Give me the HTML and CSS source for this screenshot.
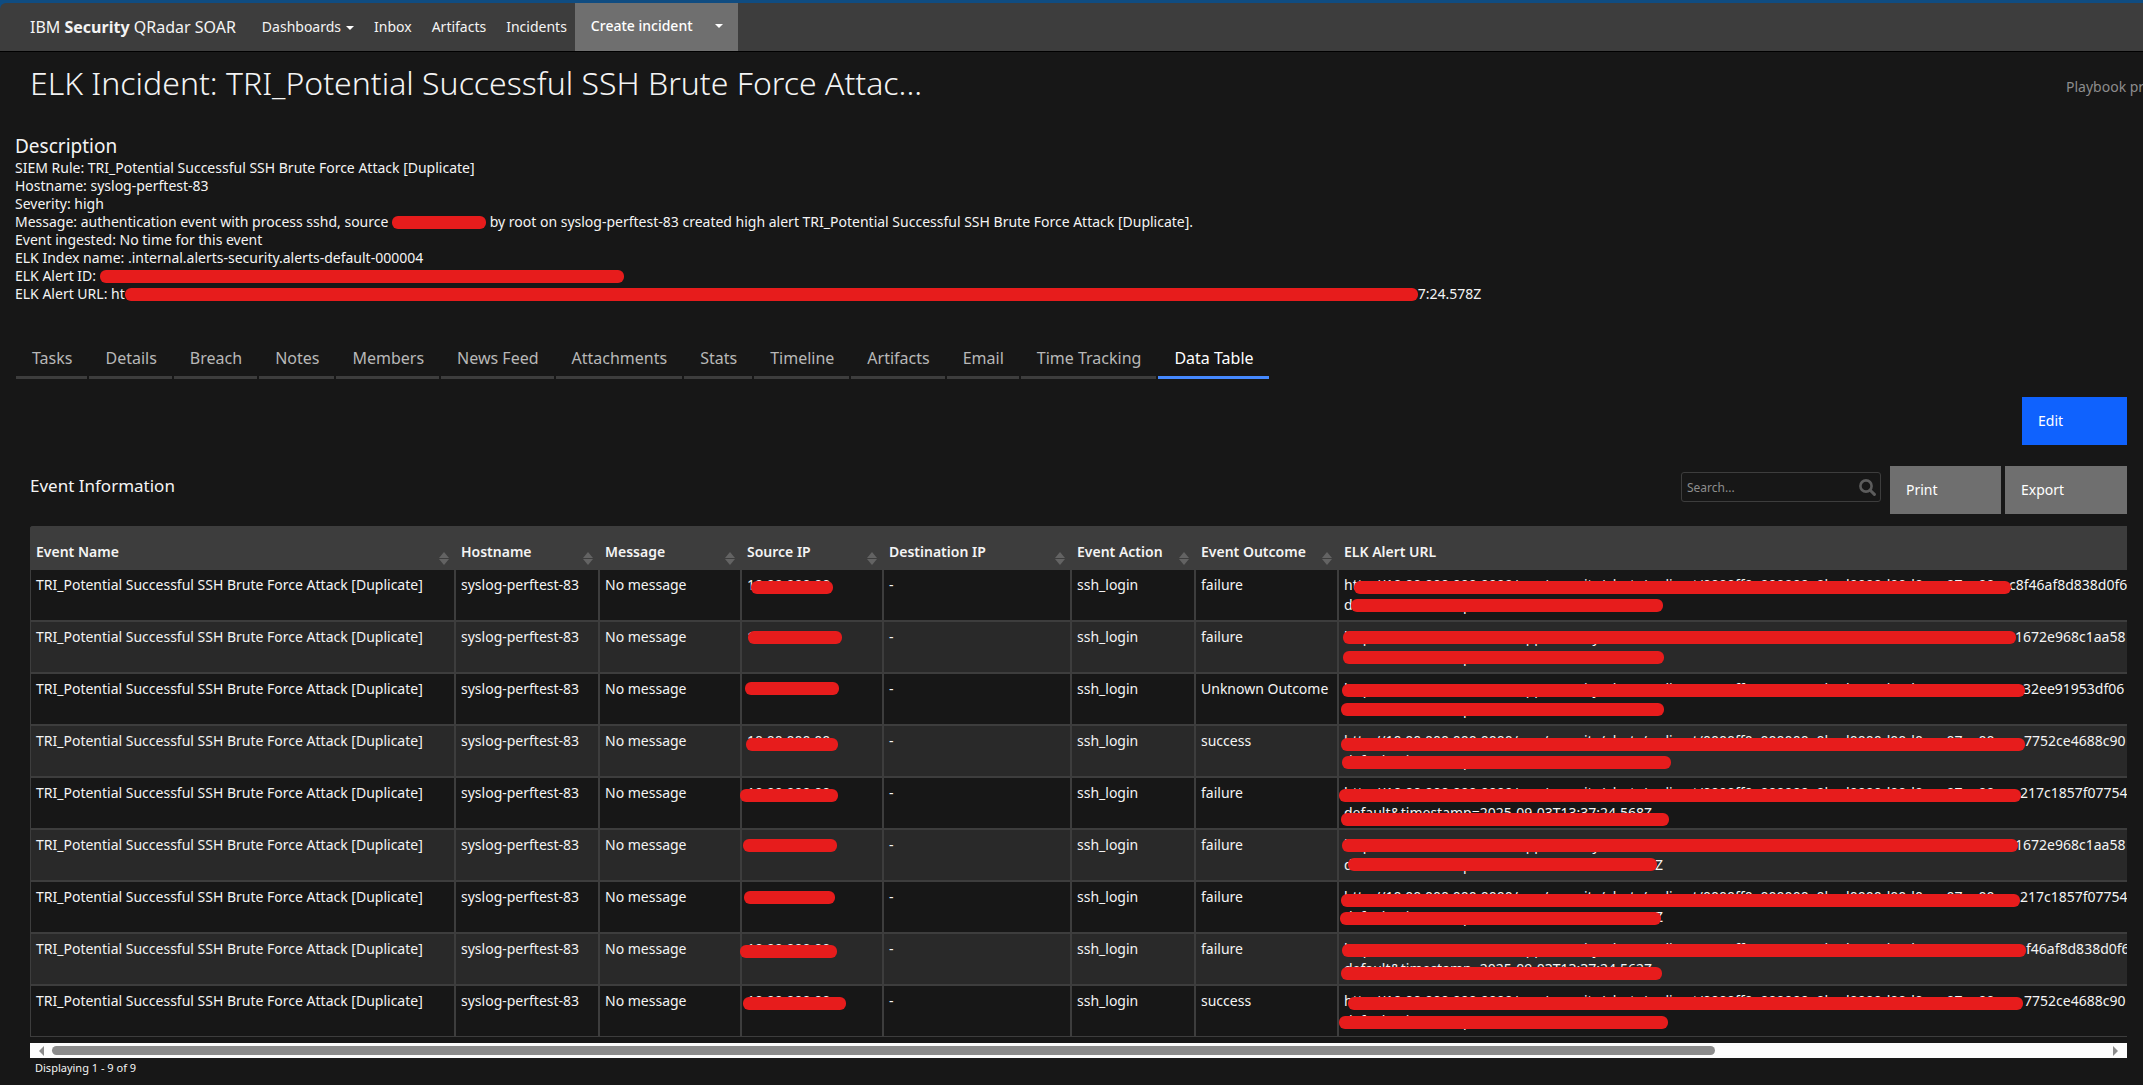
FILE: index.html
```html
<!DOCTYPE html>
<html lang="en">
<head>
<meta charset="utf-8">
<title>IBM Security QRadar SOAR</title>
<link rel="stylesheet" href="styles.css">
</head>
<body>
<header class="topbar">
  <div class="topbar-inner">
    <a class="brand" href="#">IBM <b>Security</b> QRadar SOAR</a>
    <nav class="nav">
      <a href="#">Dashboards<span class="caret"></span></a>
      <a href="#">Inbox</a>
      <a href="#">Artifacts</a>
      <a href="#">Incidents</a>
    </nav>
    <button class="create" type="button"><span>Create incident</span><span class="caret"></span></button>
  </div>
</header>

<main class="page">
  <div class="heading">
    <h1>ELK Incident: TRI_Potential Successful SSH Brute Force Attac...</h1>
    <a class="playbook" href="#">Playbook progress</a>
  </div>

  <section class="description">
    <h2>Description</h2>
    <p>SIEM Rule: TRI_Potential Successful SSH Brute Force Attack [Duplicate]</p>
    <p>Hostname: syslog-perftest-83</p>
    <p>Severity: high</p>
    <p>Message: authentication event with process sshd, source <span class="pill" style="width:94px"></span> by root on syslog-perftest-83 created high alert TRI_Potential Successful SSH Brute Force Attack [Duplicate].</p>
    <p>Event ingested: No time for this event</p>
    <p>ELK Index name: .internal.alerts-security.alerts-default-000004</p>
    <p>ELK Alert ID: <span class="pill" style="width:524px"></span></p>
    <p>ELK Alert URL: ht<span class="pill" style="width:1293px"></span>7:24.578Z</p>
  </section>

  <nav class="tabs">
    <a href="#">Tasks</a>
    <a href="#">Details</a>
    <a href="#">Breach</a>
    <a href="#">Notes</a>
    <a href="#">Members</a>
    <a href="#">News Feed</a>
    <a href="#">Attachments</a>
    <a href="#">Stats</a>
    <a href="#">Timeline</a>
    <a href="#">Artifacts</a>
    <a href="#">Email</a>
    <a href="#">Time Tracking</a>
    <a class="active" href="#" aria-current="page">Data Table</a>
  </nav>

  <section class="data">
    <div class="edit-row"><button class="btn primary" type="button">Edit</button></div>
    <div class="toolbar">
      <h3>Event Information</h3>
      <div class="search">
        <input type="text" placeholder="Search..." aria-label="Search">
        <svg viewBox="0 0 17 17" width="17" height="17" aria-hidden="true"><circle cx="7" cy="7" r="5.6" fill="none" stroke="#5c5c5c" stroke-width="2.6"/><path d="M11.2 11.2L15.4 15.4" stroke="#5c5c5c" stroke-width="3" stroke-linecap="round"/></svg>
      </div>
      <button class="btn print" type="button">Print</button>
      <button class="btn export" type="button">Export</button>
    </div>

    <div class="grid">
      <table>
        <colgroup><col class="c-name"><col class="c-host"><col class="c-msg"><col class="c-src"><col class="c-dst"><col class="c-act"><col class="c-out"><col class="c-url"></colgroup>
        <thead>
          <tr>
            <th>Event Name<i class="sort"></i></th>
            <th>Hostname<i class="sort"></i></th>
            <th>Message<i class="sort"></i></th>
            <th>Source IP<i class="sort"></i></th>
            <th>Destination IP<i class="sort"></i></th>
            <th>Event Action<i class="sort"></i></th>
            <th>Event Outcome<i class="sort"></i></th>
            <th>ELK Alert URL</th>
          </tr>
        </thead>
        <tbody>
          <tr>
            <td>TRI_Potential Successful SSH Brute Force Attack [Duplicate]</td><td>syslog-perftest-83</td><td>No message</td>
            <td>10.00.000.00<i class="mark" style="left:9px;top:11px;width:82px"></i></td>
            <td>-</td><td>ssh_login</td><td>failure</td>
            <td><span class="masked" style="width:665px">http://10.00.000.000:0000/app/security/alerts/redirect/0000ff0e000000e0bed0000d00d0aee07ee00</span>c8f46af8d838d0f6<br>default&amp;timestamp=0000-00-00T00:00:00.000Z<i class="mark" style="left:15px;top:11px;width:657px"></i><i class="mark" style="left:12px;top:29px;width:312px"></i></td>
          </tr>
          <tr>
            <td>TRI_Potential Successful SSH Brute Force Attack [Duplicate]</td><td>syslog-perftest-83</td><td>No message</td>
            <td>10.00.000.00<i class="mark" style="left:6px;top:9px;width:94px"></i></td>
            <td>-</td><td>ssh_login</td><td>failure</td>
            <td><span class="masked" style="width:671px">http://10.00.000.000:0000/app/security/alerts/redirect/0000ff0e000000e0bed0000d00d0aee07ee00</span>1672e968c1aa58<br>default&amp;timestamp=0000-00-00T00:00:00.000Z<i class="mark" style="left:4px;top:9px;width:673px"></i><i class="mark" style="left:4px;top:29px;width:321px"></i></td>
          </tr>
          <tr>
            <td>TRI_Potential Successful SSH Brute Force Attack [Duplicate]</td><td>syslog-perftest-83</td><td>No message</td>
            <td>10.00.000.00<i class="mark" style="left:3px;top:8px;width:94px"></i></td>
            <td>-</td><td>ssh_login</td><td>Unknown Outcome</td>
            <td><span class="masked" style="width:679px">http://10.00.000.000:0000/app/security/alerts/redirect/0000ff0e000000e0bed0000d00d0aee07ee00</span>32ee91953df06<br>default&amp;timestamp=0000-00-00T00:00:00.000Z<i class="mark" style="left:3px;top:10px;width:683px"></i><i class="mark" style="left:2px;top:29px;width:323px"></i></td>
          </tr>
          <tr>
            <td>TRI_Potential Successful SSH Brute Force Attack [Duplicate]</td><td>syslog-perftest-83</td><td>No message</td>
            <td>10.00.000.00<i class="mark" style="left:4px;top:12px;width:92px"></i></td>
            <td>-</td><td>ssh_login</td><td>success</td>
            <td><span class="masked" style="width:680px">http://10.00.000.000:0000/app/security/alerts/redirect/0000ff0e000000e0bed0000d00d0aee07ee00</span>7752ce4688c90<br>default&amp;timestamp=0000-00-00T00:00:00.000Z<i class="mark" style="left:2px;top:12px;width:684px"></i><i class="mark" style="left:3px;top:30px;width:329px"></i></td>
          </tr>
          <tr>
            <td>TRI_Potential Successful SSH Brute Force Attack [Duplicate]</td><td>syslog-perftest-83</td><td>No message</td>
            <td>10.00.000.00<i class="mark" style="left:-2px;top:11px;width:98px"></i></td>
            <td>-</td><td>ssh_login</td><td>failure</td>
            <td><span class="masked" style="width:676px">http://10.00.000.000:0000/app/security/alerts/redirect/0000ff0e000000e0bed0000d00d0aee07ee00</span>217c1857f07754<br>default&amp;timestamp=2025-09-03T13:37:24.568Z<i class="mark" style="left:0;top:11px;width:682px"></i><i class="mark" style="left:2px;top:35px;width:328px"></i></td>
          </tr>
          <tr>
            <td>TRI_Potential Successful SSH Brute Force Attack [Duplicate]</td><td>syslog-perftest-83</td><td>No message</td>
            <td>10.00.000.00<i class="mark" style="left:1px;top:9px;width:94px"></i></td>
            <td>-</td><td>ssh_login</td><td>failure</td>
            <td><span class="masked" style="width:671px">http://10.00.000.000:0000/app/security/alerts/redirect/0000ff0e000000e0bed0000d00d0aee07ee00</span>1672e968c1aa58<br><span class="masked" style="width:311px">default&amp;timestamp=0000-00-00T00:00:00.00</span>Z<i class="mark" style="left:3px;top:9px;width:676px"></i><i class="mark" style="left:9px;top:28px;width:309px"></i></td>
          </tr>
          <tr>
            <td>TRI_Potential Successful SSH Brute Force Attack [Duplicate]</td><td>syslog-perftest-83</td><td>No message</td>
            <td>10.00.000.00<i class="mark" style="left:2px;top:9px;width:91px"></i></td>
            <td>-</td><td>ssh_login</td><td>failure</td>
            <td><span class="masked" style="width:676px">http://10.00.000.000:0000/app/security/alerts/redirect/0000ff0e000000e0bed0000d00d0aee07ee00</span>217c1857f07754<br><span class="masked" style="width:311px">default&amp;timestamp=0000-00-00T00:00:00.00</span>Z<i class="mark" style="left:2px;top:12px;width:679px"></i><i class="mark" style="left:1px;top:30px;width:321px"></i></td>
          </tr>
          <tr>
            <td>TRI_Potential Successful SSH Brute Force Attack [Duplicate]</td><td>syslog-perftest-83</td><td>No message</td>
            <td>10.00.000.00<i class="mark" style="left:-2px;top:11px;width:97px"></i></td>
            <td>-</td><td>ssh_login</td><td>failure</td>
            <td><span class="masked" style="width:682px">http://10.00.000.000:0000/app/security/alerts/redirect/0000ff0e000000e0bed0000d00d0aee07ee00</span>f46af8d838d0f6<br>default&amp;timestamp=2025-09-03T13:37:24.562Z<i class="mark" style="left:3px;top:10px;width:684px"></i><i class="mark" style="left:2px;top:33px;width:321px"></i></td>
          </tr>
          <tr>
            <td>TRI_Potential Successful SSH Brute Force Attack [Duplicate]</td><td>syslog-perftest-83</td><td>No message</td>
            <td>10.00.000.00<i class="mark" style="left:1px;top:11px;width:103px"></i></td>
            <td>-</td><td>ssh_login</td><td>success</td>
            <td><span class="masked" style="width:680px">http://10.00.000.000:0000/app/security/alerts/redirect/0000ff0e000000e0bed0000d00d0aee07ee00</span>7752ce4688c90<br>default&amp;timestamp=0000-00-00T00:00:00.000Z<i class="mark" style="left:9px;top:11px;width:675px"></i><i class="mark" style="left:0;top:30px;width:329px"></i></td>
          </tr>
        </tbody>
      </table>
    </div>

    <div class="scrollbar" aria-hidden="true">
      <span class="arrow left"></span>
      <span class="track"><span class="thumb"></span></span>
      <span class="arrow right"></span>
    </div>
    <p class="count">Displaying 1 - 9 of 9</p>
  </section>
</main>
</body>
</html>
```
FILE: styles.css
```css
* { box-sizing: border-box; }

body {
  margin: 0;
  background: #171717;
  color: #f4f4f4;
  font: 14px/18px "Noto Sans", "Open Sans", sans-serif;
  overflow-x: hidden;
}

h1, h2, h3, p { margin: 0; font-weight: 400; }
a { color: inherit; text-decoration: none; }
button { border: 0; color: #fff; font: inherit; text-align: left; }

/* Top navigation */
.topbar {
  padding-top: 3px;
  background: #0f4c81;
  border-bottom: 1px solid #000;
}
.topbar-inner {
  display: flex;
  align-items: center;
  height: 48px;
  padding-left: 30px;
  background: #3d3d3d;
  border-radius: 6px 0 0 0;
}
.brand { font-size: 16px; line-height: 24px; white-space: nowrap; }
.nav { display: flex; gap: 20px; margin-left: 26px; }
.caret {
  display: inline-block;
  border: 4px solid transparent;
  border-top-color: #fff;
  border-bottom: 0;
  margin-left: 5px;
  vertical-align: 2px;
}
.create {
  display: flex;
  align-items: center;
  justify-content: space-between;
  align-self: stretch;
  width: 163px;
  margin-left: 8px;
  padding: 0 15px 2px 16px;
  background: #6f6f6f;
  font-weight: 500;
  white-space: nowrap;
}

/* Incident heading */
.heading {
  display: flex;
  justify-content: space-between;
  padding: 11px 0 0 30px;
}
.heading h1 { font-size: 32px; line-height: 40px; font-weight: 300; }
.playbook {
  width: 77px;
  padding-top: 15px;
  color: #8d8d8d;
  white-space: nowrap;
  overflow: hidden;
}

.description { padding: 30px 15px 0; }
.description h2 { font-size: 19px; line-height: 26px; }
.description p { white-space: nowrap; }

/* Red strokes over private values */
.pill, .mark {
  height: 13px;
  background: #e71c1c;
  border-radius: 6px;
}
.pill { display: inline-block; vertical-align: -2px; }
.mark { position: absolute; }

/* Tabs */
.tabs { display: flex; gap: 2px; padding: 43px 16px 0; }
.tabs a {
  padding: 0 15px 6px 16px;
  border-bottom: 3px solid #3d3d3d;
  color: #b8b8b8;
  font-size: 16px;
  line-height: 24px;
  white-space: nowrap;
}
.tabs .active { color: #fff; border-color: #4589ff; }

/* Data table section */
.data { padding: 18px 16px 12px 30px; }
.edit-row { display: flex; justify-content: flex-end; }
.btn {
  height: 48px;
  padding: 0 16px;
  background: #6f6f6f;
}
.primary { width: 105px; background: #0f62fe; }
.print { width: 111px; margin: 0 4px 0 9px; }
.export { width: 122px; }

.toolbar { display: flex; margin: 21px 0 12px; }
.toolbar h3 { flex: 1; padding-top: 8px; font-size: 17px; line-height: 24px; }
.search { position: relative; margin-top: 6px; }
.search input {
  display: block;
  width: 200px;
  height: 30px;
  padding: 0 28px 0 5px;
  border: 1px solid #3d3d3d;
  border-radius: 3px;
  background: transparent;
  color: #f4f4f4;
  font: 12px/18px "Noto Sans", sans-serif;
}
.search input::placeholder { color: #8d8d8d; opacity: 1; }
.search svg { position: absolute; right: 5px; top: 7px; }

.grid { overflow: hidden; border-radius: 3px 0 0 0; }
table {
  width: 2586px;
  table-layout: fixed;
  border-collapse: separate;
  border-spacing: 0;
  line-height: 20px;
}
.c-name { width: 425px; }
.c-host { width: 144px; }
.c-msg, .c-src { width: 142px; }
.c-dst { width: 188px; }
.c-act { width: 124px; }
.c-out { width: 143px; }
th, td {
  position: relative;
  padding: 5px;
  border: 1px solid #3d3d3d;
  text-align: left;
  vertical-align: top;
  white-space: nowrap;
}
th { padding: 15px 5px 6px; background: #3d3d3d; font-weight: 600; }
td { height: 52px; }
tbody tr:nth-child(even) td { background: #292929; }

.masked {
  display: inline-block;
  overflow: hidden;
  vertical-align: top;
}

.sort { position: absolute; right: 5px; top: 25px; width: 10px; height: 13px; }
.sort::before, .sort::after {
  content: "";
  display: block;
  border: 5px solid transparent;
}
.sort::before { border-top: 0; border-bottom: 6px solid #636363; margin-bottom: 1px; }
.sort::after { border-bottom: 0; border-top: 6px solid #636363; }

/* Horizontal scrollbar */
.scrollbar {
  display: flex;
  align-items: center;
  height: 15px;
  margin-top: 6px;
  padding: 0 9px;
  background: #fcfcfc;
}
.track { flex: 1; margin: 0 8px; }
.thumb { display: block; width: 81%; height: 9px; border-radius: 5px; background: #8b8b8b; }
.arrow { border: 5px solid transparent; }
.arrow.left { border-left: 0; border-right-color: #8b8b8b; }
.arrow.right { border-right: 0; border-left-color: #8b8b8b; }
.count { padding: 1px 5px 0; font-size: 11px; }
```
